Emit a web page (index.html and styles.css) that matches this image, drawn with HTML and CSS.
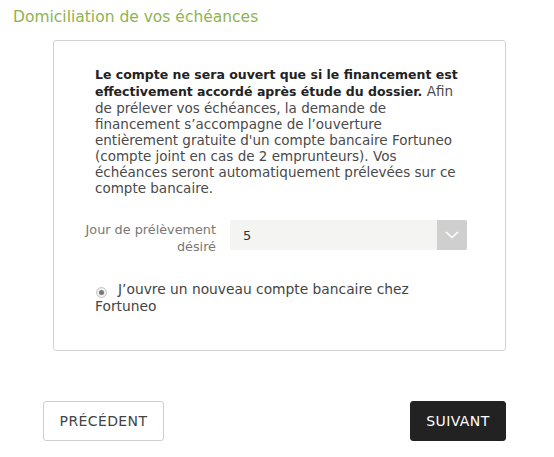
FILE: index.html
```html
<!DOCTYPE html>
<html lang="fr">
<head>
<meta charset="utf-8">
<link rel="stylesheet" href="styles.css">
</head>
<body>
<h2 class="title">Domiciliation de vos échéances</h2>
<div class="card">
  <p class="intro"><strong><span>Le compte ne sera ouvert que si le financement est</span> <span>effectivement accordé après étude du dossier.</span></strong> <span>Afin</span> <span>de prélever vos échéances, la demande de financement s’accompagne de l’ouverture entièrement gratuite d'un compte bancaire Fortuneo (compte joint en cas de 2 emprunteurs). Vos échéances seront automatiquement prélevées sur ce compte bancaire.</span></p>
  <div class="field">
    <label class="field-label">Jour de prélèvement désiré</label>
    <div class="select">
      <span class="select-value">5</span>
      <span class="select-arrow"><svg width="14" height="8" viewBox="0 0 14 8"><path d="M1 1l6 5.5L13 1" fill="none" stroke="#fff" stroke-width="1.6"/></svg></span>
    </div>
  </div>
  <div class="radio-row">
    <span class="radio"><span class="radio-dot"></span></span>J’ouvre un nouveau compte bancaire chez Fortuneo
  </div>
</div>
<div class="actions">
  <button class="btn btn-prev">PRÉCÉDENT</button>
  <button class="btn btn-next">SUIVANT</button>
</div>
</body>
</html>
```
FILE: styles.css
```css
* { box-sizing: border-box; }
body {
  margin: 0;
  font-family: "DejaVu Sans", "Open Sans", sans-serif;
  color: #444;
  background: #fff;
}
.title {
  margin: 0;
  padding: 7px 0 0 13px;
  font-size: 15.5px;
  font-weight: 400;
  line-height: 20px;
  color: #8fb352;
}
.card {
  margin: 13px 48px 0 53px;
  border: 1px solid #d2d2d2;
  border-radius: 3px;
  padding: 25px 38px 40px 41px;
  height: 311px;
}
.intro {
  margin: 0;
  max-width: 366px;
  font-size: 13.5px;
  line-height: 16px;
  color: #4a4a4a;
}
.intro strong { color: #222; font-weight: 700; font-size: 12.5px; }
.field {
  display: flex;
  align-items: flex-start;
  margin-top: 24px;
  margin-left: -15px;
}
.field-label {
  width: 136px;
  text-align: right;
  font-size: 12.8px;
  line-height: 17px;
  color: #777;
  padding-top: 1px;
}
.select {
  flex: 1;
  margin-left: 14px;
  height: 30px;
  background: #f4f4f2;
  border-radius: 2px;
  display: flex;
  align-items: center;
}
.select-value {
  flex: 1;
  padding-left: 13px;
  font-size: 13px;
  color: #333;
}
.select-arrow {
  width: 30px;
  height: 30px;
  background: #cfcfcf;
  border-radius: 0 2px 2px 0;
  display: flex;
  align-items: center;
  justify-content: center;
}
.radio-row {
  margin-top: 26px;
  font-size: 13.8px;
  line-height: 16px;
  color: #444;
  padding-right: 40px;
}
.radio {
  display: inline-flex;
  align-items: center;
  justify-content: center;
  width: 11px;
  height: 11px;
  border-radius: 50%;
  border: 1px solid #c8c8c8;
  background: #eee;
  margin: 0 11px 0 1px;
  vertical-align: -1px;
}
.radio-dot {
  width: 5px;
  height: 5px;
  border-radius: 50%;
  background: #777;
}
.actions {
  display: flex;
  justify-content: space-between;
  margin: 50px 48px 0 43px;
}
.btn {
  height: 40px;
  border-radius: 3px;
  font-family: inherit;
  font-size: 14px;
  letter-spacing: 0.4px;
  padding: 0;
  cursor: pointer;
}
.btn-prev {
  width: 121px;
  background: #fff;
  border: 1px solid #cfcfcf;
  color: #444;
}
.btn-next {
  width: 96px;
  background: #222;
  border: 1px solid #222;
  color: #fff;
}
```
